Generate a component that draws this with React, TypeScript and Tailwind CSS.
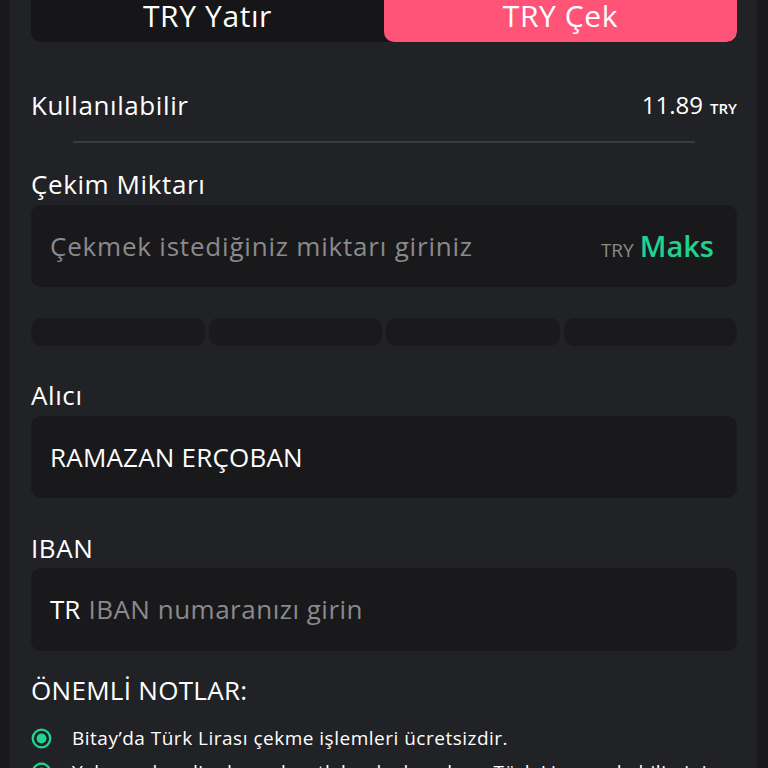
import React from 'react';

const PERCENTS = ['25%', '50%', '75%', '100%'];

const NOTES = [
  'Bitay’da Türk Lirası çekme işlemleri ücretsizdir.',
  'Yalnızca kendi adınıza kayıtlı banka hesabına Türk Lirası çekebilirsiniz.',
];

const Bullet: React.FC = () => (
  <svg className="h-[21px] w-[21px] shrink-0" viewBox="0 0 22 22" fill="none">
    <circle cx="11" cy="11" r="9.2" stroke="#22d391" strokeWidth="2.4" />
    <circle cx="11" cy="11" r="5.2" fill="#22d391" />
  </svg>
);

const App: React.FC = () => {
  return (
    <div className="min-h-[768px] w-full overflow-hidden bg-[#19191b] font-['Open_Sans',sans-serif]">
      <div className="ml-[10px] mr-[11px] h-[768px] overflow-hidden border-l border-[#26272b] bg-[#212226] px-[20px]">
        {/* tabs */}
        <div className="flex h-[42px] overflow-hidden rounded-b-[10px] bg-[#161618]">
          <button className="flex flex-1 items-center justify-center pb-[10px] text-[30px] leading-[32px] tracking-[0.6px] text-white">
            TRY Yatır
          </button>
          <button className="flex flex-1 items-center justify-center rounded-b-[10px] bg-[#ff5478] pb-[10px] text-[30px] leading-[32px] tracking-[0.6px] text-white">
            TRY Çek
          </button>
        </div>

        {/* available */}
        <div className="mt-[43px] flex h-[40px] items-center justify-between">
          <span className="text-[26px] tracking-[0.6px] text-white">Kullanılabilir</span>
          <span className="flex items-baseline gap-[7px] text-white">
            <span className="text-[24px] font-medium">11.89</span>
            <span className="text-[15px] font-semibold">TRY</span>
          </span>
        </div>
        <div className="mx-[42px] mt-[16px] h-[2px] bg-[#3a3b40]" />

        {/* amount */}
        <div className="mt-[25px] flex h-[32px] items-center text-[26px] tracking-[0.6px] text-white">Çekim Miktarı</div>
        <div className="mt-[5px] flex h-[82px] items-center justify-between rounded-[10px] bg-[#19191b] pl-[19px] pr-[23px]">
          <span className="text-[26px] tracking-[0.8px] text-[#8a8a8c]">Çekmek istediğiniz miktarı giriniz</span>
          <span className="flex items-baseline gap-[6px]">
            <span className="text-[19px] font-medium text-[#8a8a8c]">TRY</span>
            <span className="text-[29px] font-semibold text-[#1fd28f]">Maks</span>
          </span>
        </div>
        <div className="mt-[31px] grid h-[28px] grid-cols-4 gap-[4px]">
          {PERCENTS.map((p) => (
            <button key={p} aria-label={p} className="rounded-[10px] bg-[#1a1a1c]" />
          ))}
        </div>

        {/* recipient */}
        <div className="mt-[33px] flex h-[32px] items-center text-[26px] tracking-[0.6px] text-white">Alıcı</div>
        <div className="mt-[5px] flex h-[82px] items-center rounded-[10px] bg-[#19191b] px-[19px]">
          <span className="text-[26px] tracking-[0.2px] text-white">RAMAZAN ERÇOBAN</span>
        </div>

        {/* iban */}
        <div className="mt-[34px] flex h-[32px] items-center text-[26px] tracking-[0.6px] text-white">IBAN</div>
        <div className="mt-[4px] flex h-[83px] items-center gap-[8px] rounded-[10px] bg-[#19191b] px-[19px]">
          <span className="text-[26px] text-white">TR</span>
          <span className="text-[26px] tracking-[0.5px] text-[#8a8a8c]">IBAN numaranızı girin</span>
        </div>

        {/* notes */}
        <div className="mt-[23px] flex h-[32px] items-center text-[26px] tracking-[0.3px] text-white">ÖNEMLİ NOTLAR:</div>
        <ul className="mt-[22px] flex flex-col gap-[13px]">
          {NOTES.map((n) => (
            <li key={n} className="flex h-[21px] items-center gap-[20px]">
              <Bullet />
              <span className="whitespace-nowrap text-[19px] font-medium tracking-[0.5px] text-white">{n}</span>
            </li>
          ))}
        </ul>
      </div>
    </div>
  );
};

export default App;
